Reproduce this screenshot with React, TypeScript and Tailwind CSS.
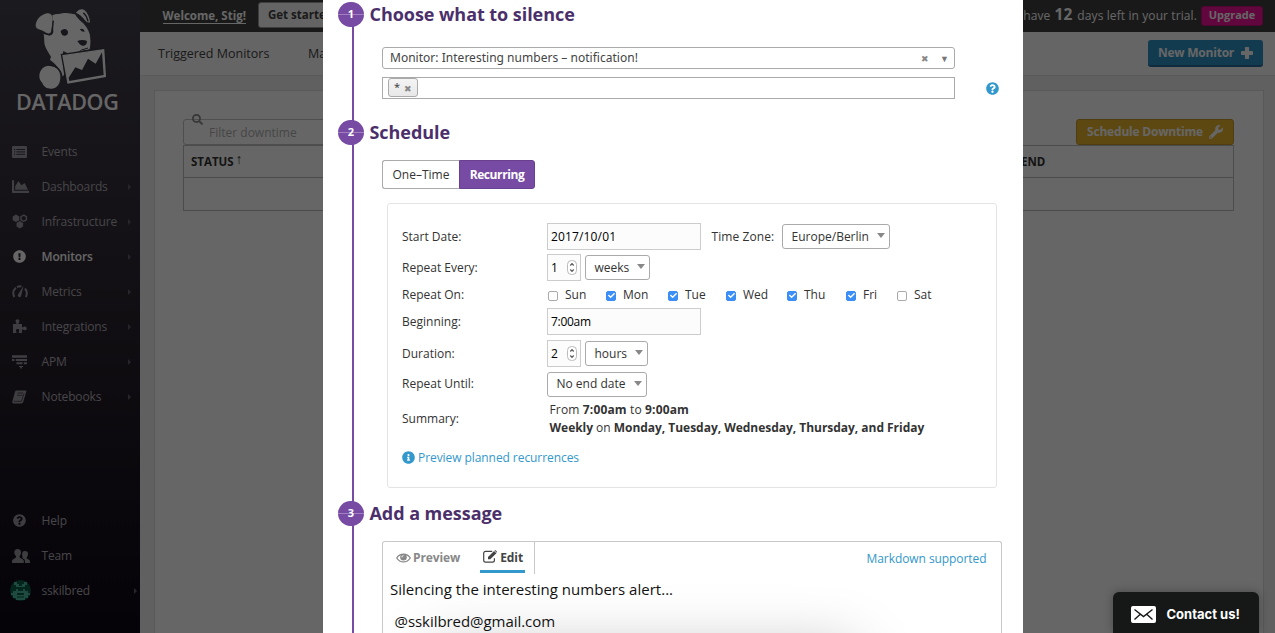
import React from "react";
import {
  FaChartArea,
  FaCheck,
  FaExclamationCircle,
  FaInfoCircle,
  FaQuestionCircle,
  FaSearch,
  FaWrench,
} from "react-icons/fa";

const EventsIcon = () => (
  <svg width="15" height="12" viewBox="0 0 15 12">
    <rect width="15" height="12" rx="1.3" fill="currentColor" />
    <path d="M2 3.5h1.2M2 5.9h1.2M2 8.3h1.2M4.4 3.5H13M4.4 5.9H13M4.4 8.3H13" stroke="#2f2b36" strokeWidth="0.9" />
  </svg>
);

const InfrastructureIcon = () => (
  <svg width="16" height="15" viewBox="0 0 16 15">
    <path d="M4 .6l3.3 1.9v3.7L4 8.1.7 6.2V2.5z" fill="currentColor" />
    <path d="M7.8 7l3.3 1.9v3.7l-3.3 1.9-3.3-1.900V8.900z" fill="currentColor" />
    <path d="M11.700 1.200l2.700 1.500v3.100l-2.700 1.500L9 5.800V2.700z" fill="none" stroke="currentColor" strokeWidth="1.400" />
  </svg>
);

const MetricsIcon = () => (
  <svg width="16" height="13" viewBox="0 0 16 13" fill="none" stroke="currentColor">
    <path d="M2.300 12C.6 8.500 1.300 5 4 2.800M5 2.100C6.500 1.300 8 1.100 9.400 1.400M13 3.500c2 2.300 2.300 5.700.8 8.500" strokeWidth="2" />
    <path d="M11.500.8L6.200 9.300a1.700 1.700 0 1 0 3 1.400z" fill="currentColor" stroke="none" />
  </svg>
);

const IntegrationsIcon = () => (
  <svg width="16" height="15" viewBox="0 0 16 15" fill="currentColor">
    <path d="M1 5h3.400C5 4.300 3.600 3.500 3.600 2.200 3.600 1 4.400.3 5.500.3s1.900.7 1.900 1.900C7.400 3.500 6 4.300 6.600 5H10v3.300c.7.600 1.500-.8 2.800-.8 1.200 0 1.900.8 1.900 1.900s-.7 1.900-1.900 1.900c-1.300 0-2.100-1.400-2.800-.8V14H6.800c-.7-.7.500-1.300.5-2.400 0-.9-.7-1.500-1.700-1.500s-1.700.6-1.700 1.500c0 1.100 1.200 1.700.5 2.400H1z" />
  </svg>
);

const ApmIcon = () => (
  <svg width="15" height="14" viewBox="0 0 15 14" fill="currentColor">
    <path d="M0 .3h15v2.400H0zM0 4h2.500v2H0zM3.800 4H15v2H3.800zM4.500 7.300h6v2h-6zM11.800 7.300H15v2h-3.200zM7 11h4v1H9.800v1.500H8.200V12H7z" />
  </svg>
);

const NotebooksIcon = () => (
  <svg width="15" height="14" viewBox="0 0 15 14">
    <path d="M4.600.4h8.900c.7 0 1 .5.8 1.200l-3 10.200c-.3 1-1 1.700-2 1.700H1.500C.4 13.500 0 12.600.3 11.500L3 1.700C3.300.9 3.800.4 4.600.4z" fill="currentColor" />
    <path d="M5.600 3h5.600M5 5.300h5.600M1.700 11.300h7.800L12 3.500" stroke="#241e29" strokeWidth="0.600" fill="none" />
  </svg>
);

const TeamIcon = () => (
  <svg width="18" height="14" viewBox="0 0 18 14" fill="currentColor">
    <path d="M5.600 0C7.800 0 9 1.400 9 3.600c0 1.500-.5 2.700-1.300 3.500v1.300l3.300 2c.5.3.8 1 .8 1.700V14H0v-1.900c0-.7.3-1.400.8-1.700l3.200-2V7.100C3 6.300 2.300 5.100 2.300 3.600 2.300 1.400 3.500 0 5.600 0z" />
    <path d="M13 2c2 0 3 1.300 3 3.100 0 1.500-.6 2.500-1.200 3.100v1.200l2.600 1.500c.4.300.6.900.6 1.500V14h-5.100v-2.300c0-.9-.4-1.400-1-1.800l-1.700-1c.8-.9 0-.9-.1-3.800C10.100 3.300 11 2 13 2z" />
  </svg>
);

const PlusIcon = () => (
  <svg width="12" height="12" viewBox="0 0 12 12" fill="currentColor">
    <path d="M4.700 0h2.600c.5 0 .8.300.8.800v3.100h3.100c.5 0 .8.300.8.800v2.600c0 .5-.3.800-.8.800H8.100v3.100c0 .5-.3.800-.8.800H4.700c-.5 0-.8-.3-.8-.8V8.100H.8C.3 8.100 0 7.800 0 7.300V4.700c0-.5.3-.8.8-.8h3.100V.8c0-.5.3-.8.800-.8z" />
  </svg>
);

const EditIcon = () => (
  <svg width="14" height="13" viewBox="0 0 14 13">
    <path d="M9.200 1.400H2.600C1.500 1.400.7 2.200.7 3.300v6.900c0 1.100.8 1.900 1.900 1.900h6.900c1.100 0 1.900-.8 1.900-1.900V8.300" fill="none" stroke="currentColor" strokeWidth="1.200" />
    <path d="M5 7l6.100-6.100 2.300 2.300L7.300 9.300H5zM11.500.5c.4-.4 1-.4 1.400 0l.9.900c.3.4.3.9 0 1.300z" fill="currentColor" />
  </svg>
);

const Avatar = () => (
  <svg width="21" height="21" viewBox="0 0 21 21">
    <circle cx="10.500" cy="10.500" r="10.500" fill="#0a5c46" />
    <path
      d="M4 2h3v2h2v2h3V4h2V2h3v3h-2v2H6V5H4zM6 9h2v2h5V9h2v2h3v2h2v2h-2v3h-3v2H6v-2H3v-3H1v-2h2v-2h3zM7 13v2h7v-2zM7 16.500v1h7v-1z"
      fill="#4fb89e"
      fillRule="evenodd"
    />
  </svg>
);

const Dog = () => (
  <svg width="140" height="95" viewBox="0 0 420 285" className="absolute left-0 top-0">
    <g fill="#fff">
      <path d="M157 46c12-6 22-3 30-6 14-3 26 1 38 3 6 10 15 20 24 26 8 8 15 18 20 32 3 16 3 32 0 47-8 2-16 2-22 5-8 6-20 9-32 9-10-1-18-4-25-9l-2 12 4 60-6 5-8-20c-8-14-16-22-28-30l3-10c-6-10-16-24-19-36-2-12-1-22-3-32l14 4c8 2 13-2 15-10z" />
      <path d="M107 78c1-19 14-34 34-38 12-2 18 8 17 20l-4 34c-3 9-12 8-18 3-8-6-18-8-26-12z" />
      <path d="M228 38c8-10 18-13 26-7 9 8 15 22 16 36-8 3-14-4-20-12-6-8-12-12-22-17z" />
      <path d="M148 197c-18 0-30 14-30 32 0 10 5 15 9 20 5 13 15 18 29 17 17-2 26-17 25-38-1-18-14-31-33-31z" />
    </g>
    <path d="M160 62l-4 34c-3 9-12 10-20 4M250 38c7 6 12 16 14 26M146 196c22-2 38 14 40 36" fill="none" stroke="#3b3744" strokeWidth="4" />
    <path d="M182 93c8-9 19-8 22 2 1 8-5 13-12 12-6-1-9-6-10-14zM232 123c9-4 19-4 28-1 3 8-4 16-12 15-6 0-11-7-16-14zM240 88c5-4 13 0 14 7-5 2-12-2-14-7z" fill="#3b3744" />
    <path d="M196 160c20 4 40 0 48-10 8-3 14-3 20-6" fill="none" stroke="#3b3744" strokeWidth="3" />
    <path d="M189 167l122-18 5 80-112 20z" fill="#fff" stroke="#3b3744" strokeWidth="12" />
    <path d="M189 167l122-18 5 80-112 20z" fill="#fff" stroke="#fff" strokeWidth="4" />
    <path d="M208 243l-2-10 20-31 20 8 18-34 23 15 19-34 5 68z" fill="#3b3744" />
  </svg>
);

function NavItem({ icon, label, active, arrow = true }: { icon: React.ReactNode; label: string; active?: boolean; arrow?: boolean }) {
  return (
    <div className={"flex h-[35px] items-center pl-3 pr-[9px] " + (active ? "text-white" : "text-[#b2aeb7]")}>
      <span className={"flex w-[29.500px] items-center " + (active ? "" : "opacity-85")}>{icon}</span>
      <span className={"flex-1 text-[12px] tracking-[-0.150px] " + (active ? "font-semibold" : "font-medium")}>{label}</span>
      {arrow && <span className="h-0 w-0 border-y-[3px] border-l-[3px] border-y-transparent border-l-[#625d68]" />}
    </div>
  );
}

function Sidebar() {
  return (
    <aside className="flex h-full w-[140px] shrink-0 flex-col bg-linear-to-b from-[#45424e] via-[#2b252f] to-[#0f0814]">
      <div className="relative h-[134px] shrink-0">
        <Dog />
        <div className="pl-[16px] pt-[87px] text-[21.500px] leading-[30px] font-semibold tracking-[-0.300px] text-white">DATADOG</div>
      </div>
      <NavItem icon={<EventsIcon />} label="Events" arrow={false} />
      <NavItem icon={<FaChartArea className="h-[17px] w-[17px]" />} label="Dashboards" />
      <NavItem icon={<InfrastructureIcon />} label="Infrastructure" />
      <NavItem icon={<FaExclamationCircle className="ml-[1px] h-[13px] w-[13px]" />} label="Monitors" active />
      <NavItem icon={<MetricsIcon />} label="Metrics" />
      <NavItem icon={<IntegrationsIcon />} label="Integrations" />
      <NavItem icon={<ApmIcon />} label="APM" />
      <NavItem icon={<NotebooksIcon />} label="Notebooks" />
      <div className="mt-auto pb-[25px]">
        <NavItem icon={<FaQuestionCircle className="ml-[1px] h-[13px] w-[13px]" />} label="Help" arrow={false} />
        <NavItem icon={<TeamIcon />} label="Team" arrow={false} />
        <div className="flex h-[35px] items-center pl-[10px] pr-[3px] text-[#b2aeb7]">
          <span className="w-[31.500px]">
            <Avatar />
          </span>
          <span className="flex-1 text-[12px] font-medium tracking-[-0.200px]">sskilbred</span>
          <span className="h-0 w-0 border-y-[3px] border-l-[3px] border-y-transparent border-l-[#625d68]" />
        </div>
      </div>
    </aside>
  );
}

function Dashboard() {
  return (
    <div className="flex h-full w-full">
      <Sidebar />
      <main className="flex min-w-0 flex-1 flex-col bg-[#f0f0f0]">
        <header className="flex h-8 shrink-0 items-center justify-between bg-[#3f3f3f] pr-3 pl-[22.500px] text-[12px] text-white">
          <div className="flex items-center gap-3">
            <span className="mb-[1px] border-b border-white text-[11.500px] leading-[15px] font-bold">Welcome, Stig!</span>
            <span className="mb-[2px] h-[26px] w-[110px] rounded-[3px] border border-[#999] bg-[#fafafa] px-[9px] text-[11.500px] leading-[24px] font-bold whitespace-nowrap text-[#444]">
              Get started
            </span>
          </div>
          <div className="flex items-center">
            <span className="mb-[3px] flex items-baseline gap-1 tracking-[0.100px]">
              You have <b className="mr-px text-[15.500px] leading-5">12</b> days left in your trial.
            </span>
            <span className="mb-px ml-1 flex h-5 w-[62px] items-center justify-center rounded-[3px] border border-[#c40d80] bg-[#f5129c] text-[11px] font-bold">Upgrade</span>
          </div>
        </header>
        <nav className="flex h-[44px] shrink-0 items-center border-b border-[#e2e2e2] bg-[#fcfcfc] pr-3 pl-[18px] text-[12.500px] text-[#444]">
          <span className="w-[150px] pt-[2px]">Triggered Monitors</span>
          <span className="flex-1 pt-[2px]">Manage</span>
          <span className="flex h-[27px] w-[115px] items-center justify-center gap-[7px] rounded-[3px] border-b-2 border-[#236e98] bg-[#2f93c8] pt-px text-[12px] font-bold tracking-[-0.220px] text-white">
            New Monitor <PlusIcon />
          </span>
        </nav>
        <div className="flex flex-1 pt-[14px] pr-[11px] pl-[14px]">
          <div className="flex-1 border border-b-0 border-[#dedede] bg-white pt-[28px] pr-[29px] pl-[28px]">
            <div className="flex h-[26px] justify-between">
              <div className="relative h-[26px] w-[300px] rounded-[3px] border border-[#c4c4c4] pl-[25px] text-[12px] leading-[25px] text-[#b0b0b0]">
                Filter downtime
                <FaSearch className="absolute top-[-6px] left-[8px] h-[11px] w-[11px] text-[#8a8a8a]" />
              </div>
              <div className="flex h-[26px] w-[158px] items-center justify-center gap-[6px] rounded-[3px] border border-[#c39a2c] bg-[#ecb52c] text-[12px] font-bold tracking-[-0.200px] text-white">
                Schedule Downtime <FaWrench className="h-[14px] w-[14px]" />
              </div>
            </div>
            <div className="h-[66px] border border-[#bdbdbd]">
              <div className="flex h-8 items-center border-b border-[#bdbdbd] pl-[7px] text-[11.500px] font-bold text-[#333]">
                <span className="w-[830px]">
                  STATUS <span className="relative -top-[2px] -ml-[1px] text-[14px] leading-4">↑</span>
                </span>
                <span>END</span>
              </div>
            </div>
          </div>
        </div>
      </main>
    </div>
  );
}

function StepTitle({ n, children }: { n: number; children: React.ReactNode }) {
  return (
    <div className="relative flex h-[25px] items-center">
      <span className="relative ml-[15px] flex h-[25px] w-[26px] items-center justify-center rounded-full bg-[#774aa4] text-[11px] font-bold text-white">
        <span className="absolute inset-x-0 top-[12px] h-px bg-white/30" />
        {n}
      </span>
      <h2 className="ml-[5.500px] text-[18px] leading-[25px] font-bold tracking-[-0.050px] text-[#4b2f6b]">{children}</h2>
    </div>
  );
}

function Select({ children, className }: { children: React.ReactNode; className: string }) {
  return (
    <span className={"flex h-[25px] items-center justify-between rounded-[3px] border border-[#aaa] bg-white pr-[4px] pl-[8.500px] whitespace-nowrap " + className}>
      {children}
      <span className="mb-[2px] h-0 w-0 border-x-4 border-t-[5px] border-x-transparent border-t-[#888]" />
    </span>
  );
}

function NumberInput({ value }: { value: number }) {
  return (
    <span className="mr-1 flex h-[27px] w-[34px] items-center justify-between border border-[#ccc] bg-[#fcfcfc] pr-[3px] pl-[3px] text-black">
      {value}
      <svg width="10" height="15" viewBox="0 0 10 15" fill="none" stroke="#555">
        <rect x="0.500" y="0.500" width="9" height="14" rx="4" fill="#fff" stroke="#bbb" />
        <path d="M3.300 5.500L5 3.600l1.700 1.900M3.300 9.500L5 11.400l1.700-1.900" strokeWidth="1.200" />
      </svg>
    </span>
  );
}

function Row({ label, className, children }: { label: string; className: string; children: React.ReactNode }) {
  return (
    <div className={"flex items-center " + className}>
      <span className="w-[145px] shrink-0">{label}</span>
      {children}
    </div>
  );
}

const days = [
  { name: "Sun", on: false, width: "w-[58px]" },
  { name: "Mon", on: true, width: "w-[62px]" },
  { name: "Tue", on: true, width: "w-[58px]" },
  { name: "Wed", on: true, width: "w-[61px]" },
  { name: "Thu", on: true, width: "w-[59px]" },
  { name: "Fri", on: true, width: "w-[51px]" },
  { name: "Sat", on: false, width: "w-[40px]" },
];

function Recurrence() {
  return (
    <section className="mt-[14px] ml-[64px] h-[285px] w-[610px] rounded-[3px] border border-[#e4e4e4] pt-[19px] pl-[14px] text-[12px] text-[#333]">
      <Row label="Start Date:" className="h-[27px]">
        <span className="h-[27px] w-[154px] border border-[#ccc] bg-[#fcfcfc] pl-[3px] leading-[25px] tracking-[0.150px] text-black">2017/10/01</span>
        <span className="w-[81px] pl-[10.500px] tracking-[0.080px]">Time Zone:</span>
        <Select className="w-[108px]">Europe/Berlin</Select>
      </Row>
      <Row label="Repeat Every:" className="mt-1 h-[27px]">
        <NumberInput value={1} />
        <Select className="w-[65px]">weeks</Select>
      </Row>
      <Row label="Repeat On:" className="h-[27px]">
        <span className="flex pl-[1px]">
          {days.map((d) => (
            <span key={d.name} className={"flex items-center gap-[7px] " + d.width}>
              <span
                className={
                  "mt-[2px] flex h-[10px] w-[10px] items-center justify-center rounded-[2px] border " +
                  (d.on ? "border-[#3b8df5] bg-[#3b8ff7]" : "border-[#aaa] bg-white")
                }
              >
                {d.on && <FaCheck className="h-[7px] w-[7px] shrink-0 text-white" />}
              </span>
              {d.name}
            </span>
          ))}
        </span>
      </Row>
      <Row label="Beginning:" className="h-[27px]">
        <span className="h-[27px] w-[154px] border border-[#ccc] bg-[#fcfcfc] pl-[3px] leading-[26px] tracking-[-0.300px] text-black">7:00am</span>
      </Row>
      <Row label="Duration:" className="mt-[5px] h-[27px]">
        <NumberInput value={2} />
        <Select className="w-[63px]">hours</Select>
      </Row>
      <Row label="Repeat Until:" className="mt-[4px] h-[26px]">
        <Select className="w-[100px]">No end date</Select>
      </Row>
      <Row label="Summary:" className="mt-[4px] h-[36px]">
        <div className="pl-[2.500px] leading-[18px]">
          <p className="tracking-[0.150px]">
            From <b>7:00am</b> to <b>9:00am</b>
          </p>
          <p className="tracking-[-0.030px]">
            <b>Weekly</b> on <b>Monday, Tuesday, Wednesday, Thursday, and Friday</b>
          </p>
        </div>
      </Row>
      <div className="mt-[12px] flex h-[18px] items-center gap-[3px] text-[#3398cc]">
        <FaInfoCircle className="mb-[2px] h-[13px] w-[13px]" />
        <span className="tracking-[-0.070px]">Preview planned recurrences</span>
      </div>
    </section>
  );
}

function Editor() {
  return (
    <section className="relative mt-[15px] ml-[59px] h-[92px] w-[620px] overflow-hidden rounded-t-[3px] border border-b-0 border-[#c8c8c8] bg-white">
      <div className="absolute top-[118px] left-[60px] h-[40px] w-[400px] shadow-[0_0_60px_12px_rgba(0,0,0,0.250)]" />
      <div className="relative flex h-[32px] items-start text-[12px]">
        <div className="flex h-[32px] w-[152px] border-r border-[#c8c8c8] pl-[13px] font-bold">
          <span className="flex h-[31px] items-center gap-[2px] text-[#888]">
            <svg width="15" height="10" viewBox="0 0 15 10" fill="none" stroke="currentColor">
              <path d="M.7 5C4-.2 11-.2 14.300 5 11 10.200 4 10.200.7 5z" strokeWidth="1.300" />
              <circle cx="7.500" cy="4.300" r="3.300" fill="currentColor" stroke="none" />
              <path d="M5.800 4.300a1.700 1.700 0 0 1 1.700-1.700" stroke="#fff" strokeWidth="0.900" />
            </svg>
            <span className="tracking-[-0.100px]">Preview</span>
          </span>
          <span className="ml-5 flex h-[31px] items-center gap-[3px] border-b-[3px] border-[#3398cc] pt-[3px] pr-[2px] pl-[3px] text-[#444]">
            <span className="mb-[2px]">
              <EditIcon />
            </span>
            <span className="tracking-[-0.100px]">Edit</span>
          </span>
        </div>
        <span className="mt-[8px] ml-auto pr-[14.500px] tracking-[-0.070px] text-[#3398cc]">Markdown supported</span>
      </div>
      <p className="relative mt-[3px] pl-[7px] text-[15px] leading-6 tracking-[0.020px] text-[#111]">Silencing the interesting numbers alert...</p>
      <p className="relative mt-[8px] pl-[11.500px] text-[15px] leading-6 tracking-[-0.050px] text-[#111]">@sskilbred@gmail.com</p>
    </section>
  );
}

function Modal() {
  return (
    <div className="absolute top-0 left-[323px] h-[633px] w-[700px] overflow-hidden bg-white pt-[2px]">
      <div className="absolute top-[14px] bottom-0 left-[29px] w-[2px] bg-[#774aa4]" />
      <StepTitle n={1}>Choose what to silence</StepTitle>
      <div className="mt-5 ml-[59px] flex h-[22px] w-[573px] items-center rounded-[3px] border border-[#aaa] pr-[5px] pl-[7px] font-['Noto_Sans',sans-serif] text-[12px] text-[#444]">
        <span className="flex-1 tracking-[0.020px]">Monitor: Interesting numbers – notification!</span>
        <span className="mt-[2px] mr-[11px] text-[9px] text-[#888]">✖</span>
        <span className="mt-px text-[9px] text-[#777]">▼</span>
      </div>
      <div className="mt-2 ml-[59px] flex h-[22px] items-center">
        <div className="h-[22px] w-[573px] border border-[#aaa] pl-[5px]">
          <span className="flex h-[19px] w-[30px] items-center gap-[4px] rounded-[3px] border border-[#aaa] bg-linear-to-b from-[#f4f4f4] to-[#e8e8e8] pl-[5px] text-[11px] text-[#333]">
            * <span className="mt-[2px] text-[9px] text-[#888]">✖</span>
          </span>
        </div>
        <FaQuestionCircle className="ml-[31px] h-[13px] w-[13px] text-[#3398cc]" />
      </div>
      <div className="mt-[21px]">
        <StepTitle n={2}>Schedule</StepTitle>
      </div>
      <div className="mt-[15px] ml-[59px] flex h-[29px] text-[12px]">
        <span className="flex w-[77px] items-center justify-center rounded-l-[3px] border border-r-0 border-[#aaa] text-[#333]">One–Time</span>
        <span className="flex w-[76px] items-center justify-center rounded-r-[3px] border border-[#69408f] bg-[#774aa4] font-bold tracking-[-0.400px] text-white">
          Recurring
        </span>
      </div>
      <Recurrence />
      <div className="mt-[13px]">
        <StepTitle n={3}>Add a message</StepTitle>
      </div>
      <Editor />
    </div>
  );
}

export default function App() {
  return (
    <div className="relative h-[633px] w-[1275px] overflow-hidden bg-white font-['Open_Sans','Noto_Sans',sans-serif]">
      <Dashboard />
      <div className="absolute inset-0 bg-black/60" />
      <Modal />
      <div className="absolute right-4 bottom-0 flex h-[41px] w-[146px] items-center gap-[10.500px] rounded-t-[6px] bg-[#161817] pt-[4px] pl-[18px] font-['Inter',sans-serif] text-[13px] font-bold text-white shadow-[0_0_10px_rgba(0,0,0,0.300)]">
        <svg width="25" height="17" viewBox="0 0 25 17" fill="none" stroke="#161817" strokeWidth="1.400" className="mb-px">
          <rect width="25" height="17" rx="2" fill="#fff" stroke="none" />
          <path d="M3.500 3.500l9 7 9-7M3.500 13.500l5.500-5M21.500 13.500l-5.500-5" />
        </svg>
        Contact us!
      </div>
    </div>
  );
}
